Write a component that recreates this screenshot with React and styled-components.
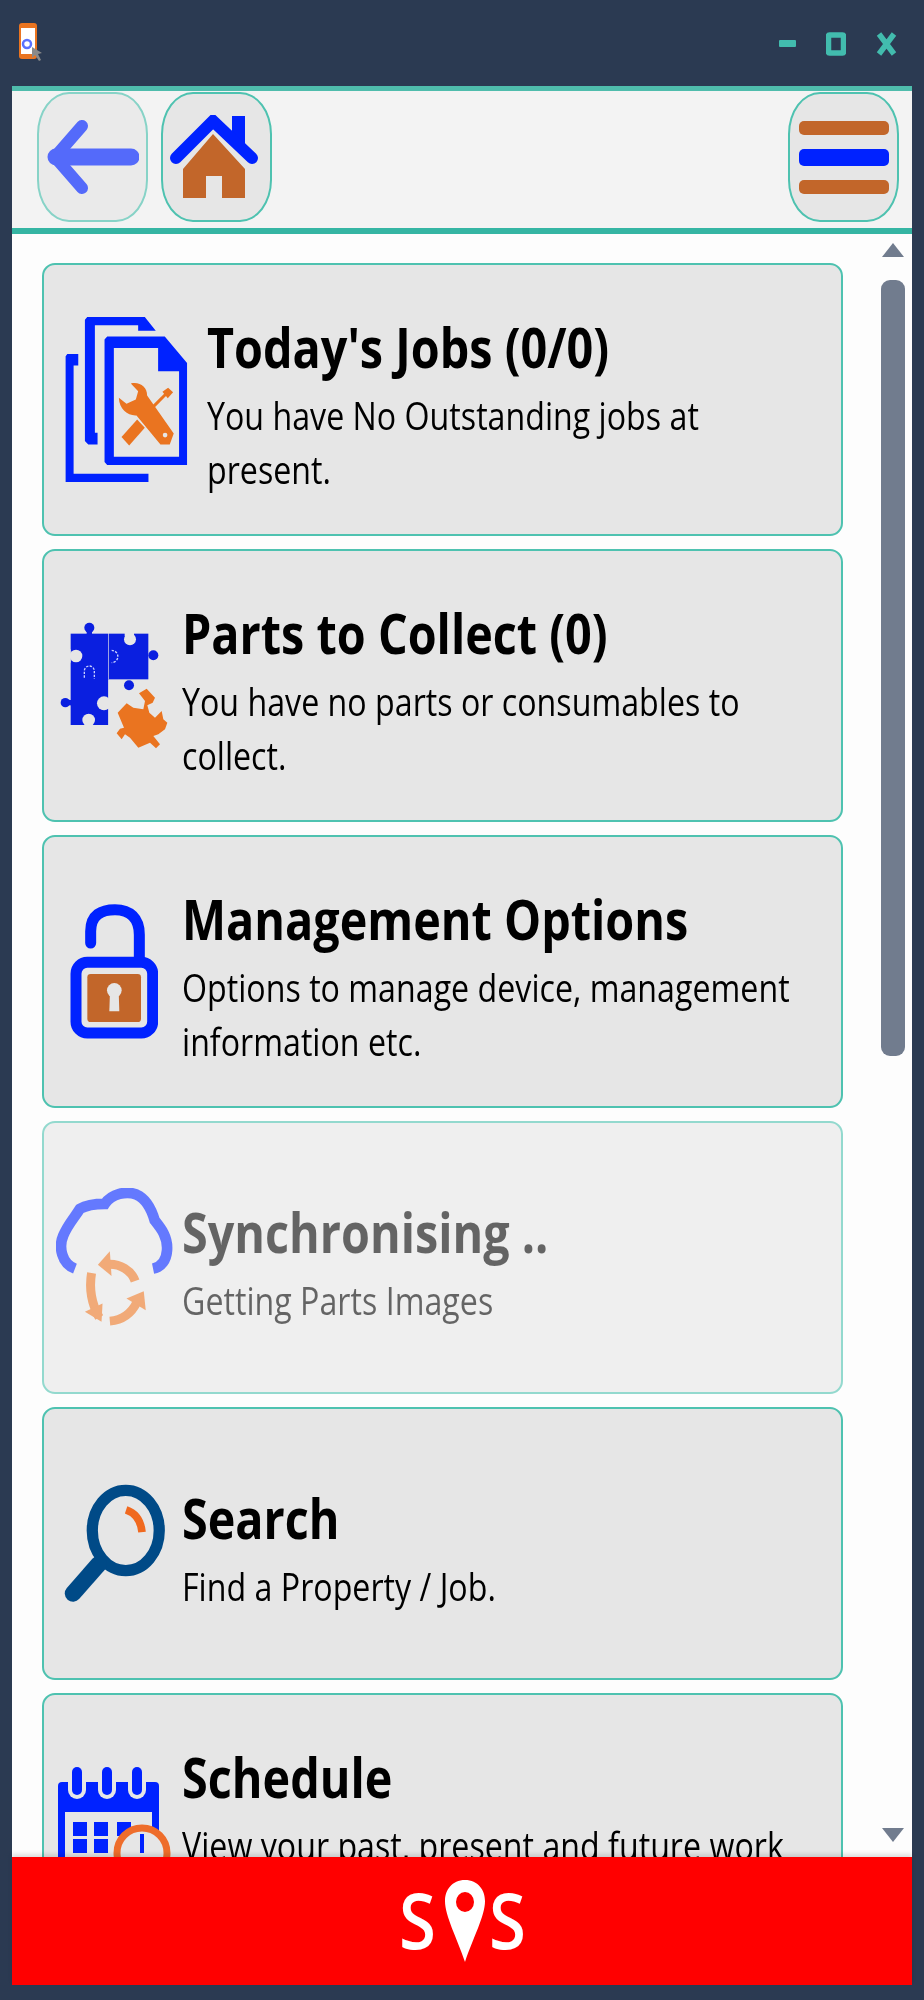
import React from "react";
import styled, { createGlobalStyle } from "styled-components";

const TEAL = "#4ec2b0";
const BLUE = "#0022ff";
const BROWN = "#c2662a";
const ORANGE = "#ea7420";
const CARD = "#e6e6e6";

const GlobalStyle = createGlobalStyle`
  html, body {
    margin: 0;
    padding: 0;
    background: #2b3a52;
    font-family: "Open Sans", "Noto Sans", sans-serif;
  }
`;

const Page = styled.div`
  width: 924px;
  height: 2000px;
  display: flex;
  flex-direction: column;
  background: #2b3a52;
  overflow: hidden;
  filter: blur(0.6px);
`;

const TitleBar = styled.header`
  height: 86px;
  flex: none;
  display: flex;
  align-items: center;
  justify-content: space-between;
  padding: 0 27px 0 19px;
`;

const WindowControls = styled.div`
  display: flex;
  align-items: center;
  gap: 30px;
  margin-top: 1px;
`;

const Window = styled.main`
  flex: 1;
  min-height: 0;
  margin: 0 12px 15px;
  display: flex;
  flex-direction: column;
  background: #fff;
`;

const Toolbar = styled.nav`
  height: 148px;
  flex: none;
  box-sizing: border-box;
  display: flex;
  gap: 13px;
  padding: 1px 13px 6px 25px;
  background: #f3f3f3;
  border-top: 5px solid #4fbcac;
  border-bottom: 6px solid #35b5a3;
`;

const Spacer = styled.div`
  flex: 1;
`;

const ToolButton = styled.button`
  width: 111px;
  height: 130px;
  flex: none;
  padding: 0;
  display: flex;
  flex-direction: column;
  align-items: center;
  justify-content: center;
  gap: 14px;
  background: ${CARD};
  border: 2px solid ${TEAL};
  border-radius: 32px / 42px;
  opacity: ${({ $faded }) => ($faded ? 0.65 : 1)};
`;

const HomeSlot = styled.span`
  display: flex;
  margin-right: 6px;
`;

const MenuBar = styled.span`
  display: block;
  width: 90px;
  height: ${({ $thick }) => ($thick ? 17 : 14)}px;
  border-radius: 5px;
  background: ${({ $color }) => $color};
`;

const Body = styled.div`
  flex: 1;
  min-height: 0;
  display: flex;
  overflow: hidden;
  background: #fdfdfd;
`;

const List = styled.div`
  width: 801px;
  flex: none;
  margin-left: 30px;
  padding-top: 29px;
  display: flex;
  flex-direction: column;
  gap: 13px;
`;

const Card = styled.section`
  height: 273px;
  flex: none;
  box-sizing: border-box;
  display: flex;
  align-items: center;
  overflow: hidden;
  background: ${CARD};
  border: 2px solid ${TEAL};
  border-radius: 13px;
  opacity: ${({ $faded }) => ($faded ? 0.6 : 1)};
`;

const IconSlot = styled.div`
  width: ${({ $wide }) => ($wide ? 163 : 138)}px;
  flex: none;
  box-sizing: border-box;
  padding-left: 2px;
  display: flex;
  justify-content: center;
`;

const CardText = styled.div`
  flex: none;
  padding-top: 8px;
  color: #000;
`;

const Title = styled.h2`
  margin: 0;
  font-size: 55px;
  line-height: 72px;
  font-weight: 700;
  white-space: nowrap;
  transform: scaleX(0.85);
  transform-origin: left center;
`;

const Description = styled.p`
  margin: 5px 0 0;
  font-size: 38px;
  line-height: 54px;
  font-weight: 400;
  white-space: pre;
  transform: scaleX(0.847);
  transform-origin: left center;
`;

const Scrollbar = styled.aside`
  width: 25px;
  flex: none;
  margin-left: 37px;
  padding: 9px 0 15px;
  display: flex;
  flex-direction: column;
  align-items: center;
`;

const ScrollArrow = styled.span`
  width: 0;
  height: 0;
  flex: none;
  border-left: 11px solid transparent;
  border-right: 11px solid transparent;
  ${({ $down }) =>
    $down
      ? "border-top: 14px solid #717c8e; margin-top: auto;"
      : "border-bottom: 14px solid #717c8e;"}
`;

const ScrollThumb = styled.div`
  width: 24px;
  height: 776px;
  flex: none;
  margin-top: 23px;
  background: #717c8e;
  border-radius: 9px;
`;

const SosBar = styled.footer`
  height: 128px;
  flex: none;
  display: flex;
  align-items: center;
  justify-content: center;
  background: #ff0000;
  box-shadow: 0 -3px 4px rgba(0, 0, 0, 0.12);
  position: relative;
`;

const SosLetter = styled.span`
  width: 37px;
  color: #fff;
  font-size: 78px;
  font-weight: 600;
  line-height: 78px;
  margin-top: -4px;
  transform: scaleX(0.86);
  transform-origin: left center;
`;

const SosPin = styled.span`
  display: flex;
  margin: 0 4px 0 9px;
`;

function AppIcon() {
  return (
    <svg width="24" height="40" viewBox="0 0 24 40">
      <rect x="0" y="0" width="18" height="36" rx="3" fill={ORANGE} />
      <rect x="2" y="5" width="14" height="26" fill="#fff" />
      <circle cx="8" cy="21" r="4" fill="none" stroke="#5b72ff" strokeWidth="2.5" />
      <path d="M13 24 L13 35 L16 32 L20 38 L22 37 L19 31 L23 30 Z" fill="#8a8a8a" />
    </svg>
  );
}

function MinimizeIcon() {
  return (
    <svg width="17" height="7" viewBox="0 0 17 7">
      <rect width="17" height="7" rx="1" fill="#42bcae" />
    </svg>
  );
}

function MaximizeIcon() {
  return (
    <svg width="20" height="24" viewBox="0 0 20 24">
      <rect x="2.5" y="3" width="15" height="18" rx="1" fill="none" stroke="#42bcae" strokeWidth="5.5" />
    </svg>
  );
}

function CloseIcon() {
  return (
    <svg width="21" height="24" viewBox="0 0 21 24">
      <path d="M3 2 L18 22 M18 2 L3 22" stroke="#42bcae" strokeWidth="5.5" fill="none" />
    </svg>
  );
}

function BackIcon() {
  return (
    <svg width="92" height="76" viewBox="47 119 92 76">
      <path d="M82 126 L55 157 L82 188" fill="none" stroke={BLUE} strokeWidth="12" strokeLinecap="round" strokeLinejoin="round" />
      <path d="M56 157 H131" stroke={BLUE} strokeWidth="17" strokeLinecap="round" />
    </svg>
  );
}

function HomeIcon() {
  return (
    <svg width="90" height="84" viewBox="169 111 90 84">
      <rect x="232" y="112" width="13" height="30" fill={BLUE} />
      <path d="M176 154 L213 117 L252 154" fill="none" stroke={BLUE} strokeWidth="12" strokeLinecap="round" />
      <path d="M213 130 L245 165 V194 H222 V172 H206 V194 H183 V165 Z" fill={BROWN} />
    </svg>
  );
}

function JobsIcon() {
  return (
    <svg width="127" height="173" viewBox="100 160 380 520">
      <path d="M112 283 H145 V318 H131 V643 H356 V668 H107 V290 Z" fill={BLUE} />
      <path d="M172 172 H345 L378 213 H325 V197 H195 V520 H203 V555 H175 L165 545 V180 Z" fill={BLUE} />
      <path
        fillRule="evenodd"
        d="M232 231 H405 L472 310 V617 H232 L224 608 V240 Z M252 265 V592 H448 V335 H385 V265 Z"
        fill={BLUE}
      />
      <path
        d="M303 372 C330 366 352 382 352 408 L432 522 L420 555 L392 555 L320 468 C295 470 268 450 267 415 L290 433 L318 420 L325 395 Z"
        fill={ORANGE}
      />
      <circle cx="406" cy="527" r="7" fill={CARD} />
      <path d="M275 533 L322 480 L345 505 L298 558 Z" fill={ORANGE} />
      <path d="M370 442 L410 402" stroke={ORANGE} strokeWidth="9" />
      <path d="M398 397 L415 385 L430 398 L414 416 Z" fill={ORANGE} />
    </svg>
  );
}

function PartsIcon() {
  return (
    <svg width="109" height="129" viewBox="90 215 327 387">
      <g fill="#0a1fe0">
        <rect x="122" y="253" width="113" height="274" />
        <rect x="237" y="253" width="118" height="137" />
        <circle cx="178" cy="235" r="15" />
        <rect x="170" y="240" width="16" height="15" />
        <circle cx="106" cy="460" r="14" />
        <rect x="110" y="452" width="14" height="16" />
        <circle cx="370" cy="318" r="15" />
        <circle cx="297" cy="408" r="15" />
      </g>
      <g fill={CARD}>
        <circle cx="138" cy="320" r="19" />
        <rect x="110" y="300" width="12" height="40" />
        <circle cx="222" cy="462" r="21" />
        <rect x="235" y="392" width="8" height="140" />
        <circle cx="176" cy="512" r="19" />
        <circle cx="300" cy="270" r="18" />
        <rect x="284" y="250" width="28" height="10" />
      </g>
      <g fill="none" stroke="#c8d0ff" strokeWidth="4" strokeDasharray="7 4">
        <path d="M163 385 V365 A15 15 0 0 1 193 365 V388" />
        <path d="M245 303 A18 18 0 1 1 245 340" />
      </g>
      <path
        d="M327 432 L350 418 L375 445 L368 460 L352 468 L358 490 L375 505 L395 485 L400 510 L412 520 L405 540 L385 555 L370 560 L390 585 L378 597 L360 580 L325 595 L300 565 L285 555 L275 570 L260 552 L270 538 L282 535 L263 490 L290 462 L310 475 L340 480 L345 455 Z"
        fill={ORANGE}
      />
    </svg>
  );
}

function LockIcon() {
  return (
    <svg width="88" height="135" viewBox="120 193 264 405">
      <path
        d="M182 310 V275 C182 225 215 210 255 210 C300 210 328 235 328 285 V360"
        fill="none"
        stroke={BLUE}
        strokeWidth="33"
        strokeLinecap="round"
      />
      <rect x="138" y="368" width="230" height="212" rx="34" fill="none" stroke={BLUE} strokeWidth="33" />
      <rect x="172" y="403" width="161" height="144" rx="10" fill={BROWN} />
      <circle cx="253" cy="452" r="22" fill={CARD} />
      <path d="M240 455 H266 L268 515 H238 Z" fill={CARD} />
    </svg>
  );
}

function SyncIcon() {
  return (
    <svg width="117" height="140" viewBox="78 203 352 420">
      <path
        d="M135 445 C95 430 85 380 100 345 C115 310 135 290 150 265 C175 250 205 250 225 250 C245 220 290 210 320 222 C350 235 365 265 375 300 C395 325 415 350 412 390 C410 420 395 440 370 445"
        fill="none"
        stroke={BLUE}
        strokeWidth="32"
      />
      <g fill="none" stroke={ORANGE} strokeWidth="27">
        <path d="M235 432 C270 430 305 450 316 482" />
        <path d="M185 458 C178 500 182 545 208 592" />
        <path d="M240 603 C275 600 305 580 322 545" />
      </g>
      <g fill={ORANGE}>
        <path d="M240 393 L204 433 L245 467 Z" />
        <path d="M165 575 L215 605 L218 550 Z" />
        <path d="M290 535 L342 513 L348 570 Z" />
      </g>
    </svg>
  );
}

function SearchIcon() {
  return (
    <svg width="103" height="120" viewBox="98 248 310 362">
      <ellipse cx="287" cy="388" rx="101" ry="121" fill="none" stroke="#004a87" strokeWidth="34" />
      <path d="M205 490 L128 578" stroke="#004a87" strokeWidth="50" strokeLinecap="round" />
      <path d="M288 326 C315 335 332 355 336 393" fill="none" stroke="#f0691f" strokeWidth="23" />
    </svg>
  );
}

function CalendarIcon() {
  return (
    <svg width="120" height="135" viewBox="55 1760 120 135">
      <rect x="59" y="1780" width="101" height="30" rx="4" fill={BLUE} />
      <path d="M59 1805 V1895 H66 V1805 Z M153 1805 V1830 H160 V1805 Z" fill={BLUE} />
      {[78, 108, 138].map((x) => (
        <g key={x}>
          <rect x={x - 9} y="1770" width="18" height="27" rx="9" fill={CARD} />
          <rect x={x - 5} y="1765" width="10" height="28" rx="5" fill={BLUE} />
        </g>
      ))}
      <g fill={BLUE}>
        {[74, 95, 118].map((x) =>
          [1820, 1837, 1855].map((y) => <rect key={`${x}-${y}`} x={x} y={y} width="14" height="14" />)
        )}
      </g>
      <circle cx="143" cy="1851" r="25" fill={CARD} stroke="#ee6d2b" strokeWidth="7" />
      <path d="M143 1832 V1851" stroke={BLUE} strokeWidth="4" />
    </svg>
  );
}

function PinIcon() {
  return (
    <svg width="40" height="82" viewBox="0 0 40 82">
      <path
        fillRule="evenodd"
        d="M20 0 C33 0 40 10 40 21 C40 36 28 58 20 82 C12 58 0 36 0 21 C0 10 7 0 20 0 Z M20 12 A9 10 0 1 0 20 32 A9 10 0 1 0 20 12 Z"
        fill="#fff"
      />
    </svg>
  );
}

const cards = [
  { title: "Today's Jobs (0/0)", text: "You have No Outstanding jobs at\npresent.", Icon: JobsIcon, wide: true },
  { title: "Parts to Collect (0)", text: "You have no parts or consumables to\ncollect.", Icon: PartsIcon },
  { title: "Management Options", text: "Options to manage device, management\ninformation etc.", Icon: LockIcon },
  { title: "Synchronising ..", text: "Getting Parts Images", Icon: SyncIcon, faded: true },
  { title: "Search", text: "Find a Property / Job.", Icon: SearchIcon },
  // second line is scrolled out of view behind the SOS bar
  { title: "Schedule", text: "View your past, present and future work\n ", Icon: CalendarIcon },
];

export default function App() {
  return (
    <>
      <GlobalStyle />
      <Page>
        <TitleBar>
          <AppIcon />
          <WindowControls>
            <MinimizeIcon />
            <MaximizeIcon />
            <CloseIcon />
          </WindowControls>
        </TitleBar>
        <Window>
          <Toolbar>
            <ToolButton $faded>
              <BackIcon />
            </ToolButton>
            <ToolButton>
              <HomeSlot>
                <HomeIcon />
              </HomeSlot>
            </ToolButton>
            <Spacer />
            <ToolButton>
              <MenuBar $color={BROWN} />
              <MenuBar $color={BLUE} $thick />
              <MenuBar $color={BROWN} />
            </ToolButton>
          </Toolbar>
          <Body>
            <List>
              {cards.map(({ title, text, Icon, wide, faded }) => (
                <Card key={title} $faded={faded}>
                  <IconSlot $wide={wide}>
                    <Icon />
                  </IconSlot>
                  <CardText>
                    <Title>{title}</Title>
                    <Description>{text}</Description>
                  </CardText>
                </Card>
              ))}
            </List>
            <Scrollbar>
              <ScrollArrow />
              <ScrollThumb />
              <ScrollArrow $down />
            </Scrollbar>
          </Body>
          <SosBar>
            <SosLetter>S</SosLetter>
            <SosPin>
              <PinIcon />
            </SosPin>
            <SosLetter>S</SosLetter>
          </SosBar>
        </Window>
      </Page>
    </>
  );
}
